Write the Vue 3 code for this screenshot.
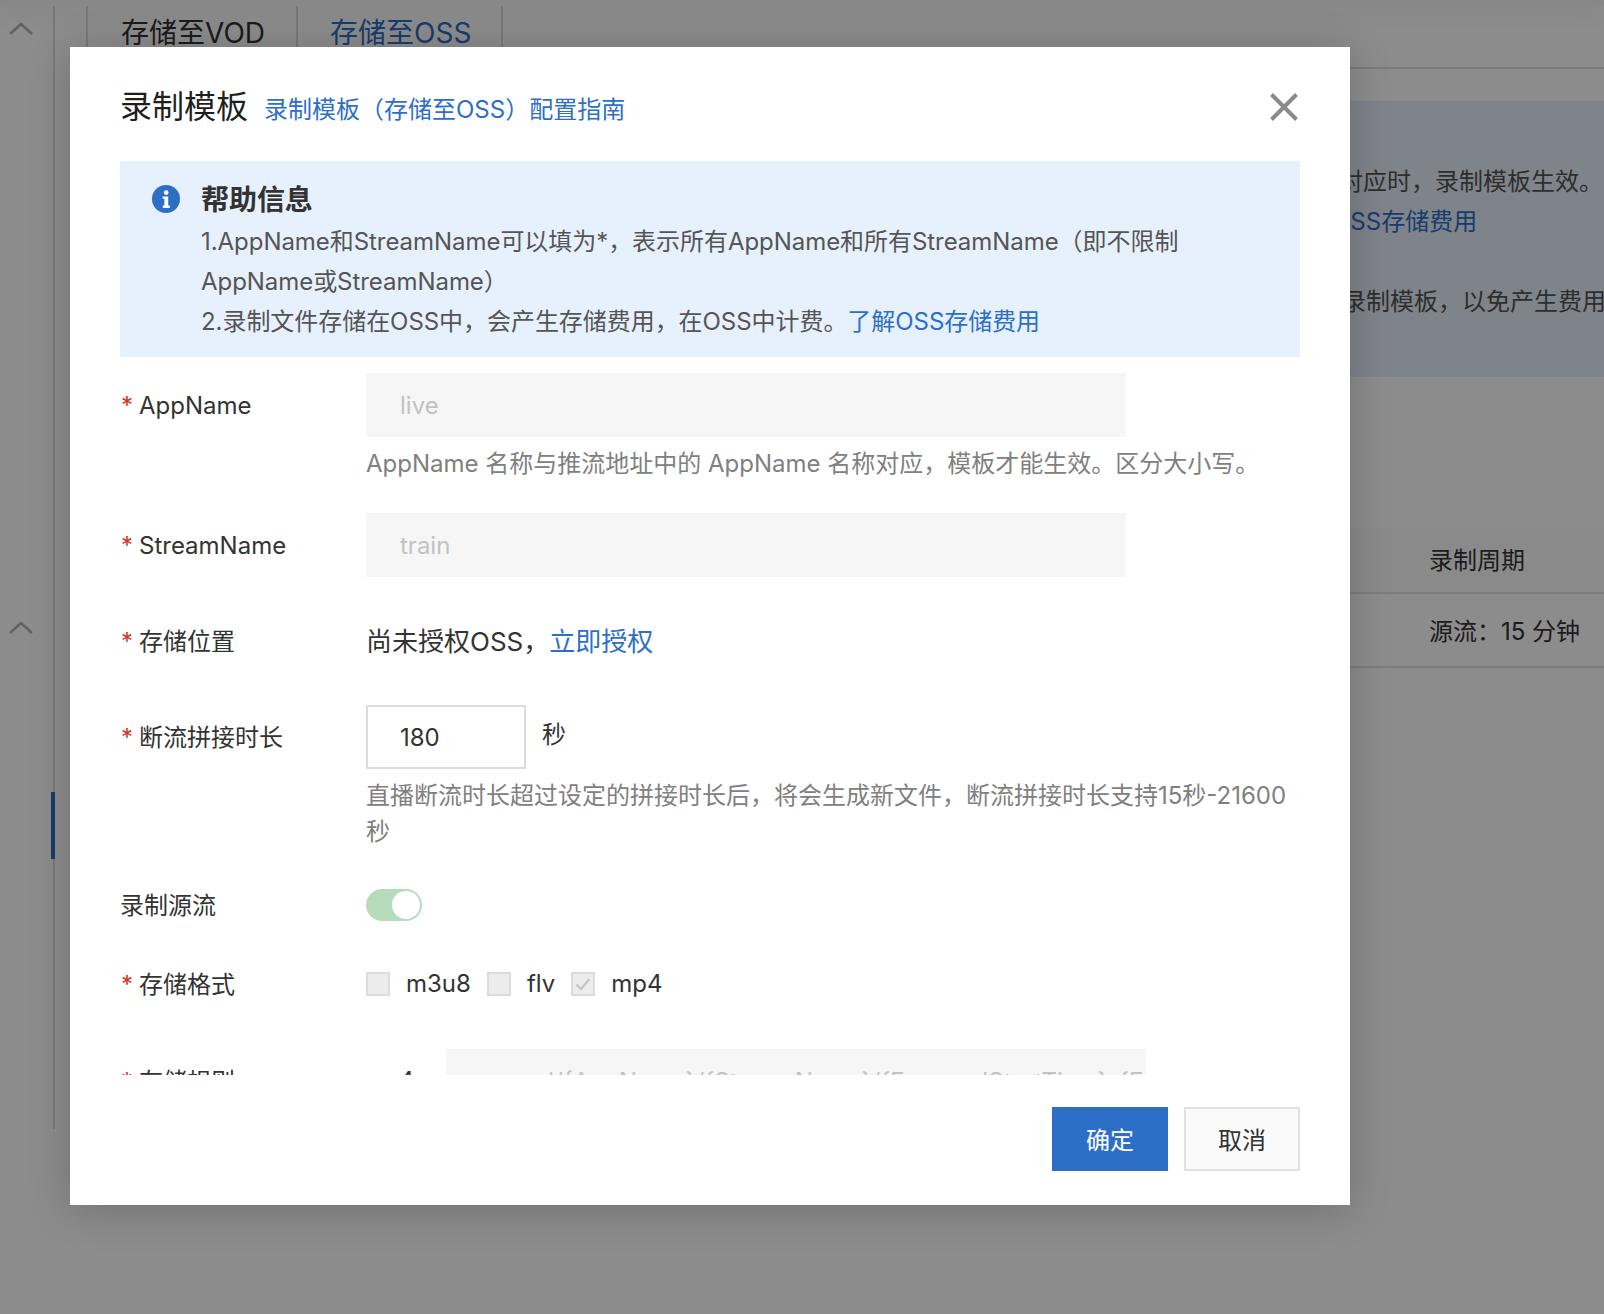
<template>
  <div class="page">
    <div class="topbar"></div>

    <div class="layout">
      <!-- Side nav -->
      <aside class="side">
        <svg class="chevron" viewBox="0 0 24 13"><path d="M1 12 12 2l11 10" /></svg>
        <svg class="chevron chevron-second" viewBox="0 0 24 13"><path d="M1 12 12 2l11 10" /></svg>
        <span class="side-mark"></span>
      </aside>

      <main class="content">
        <div class="tabs">
          <div class="tab">存储至VOD</div>
          <div class="tab tab-active">存储至OSS</div>
        </div>

        <div class="notice">
          <div>对应时，录制模板生效。</div>
          <div class="notice-link"><a>了解OSS存储费用</a></div>
          <div class="notice-last">录制模板，以免产生费用</div>
        </div>

        <div class="table">
          <div class="table-head">录制周期</div>
          <div class="table-row">源流：15 分钟</div>
        </div>
      </main>
    </div>

    <div class="mask"></div>

    <div class="dialog">
      <header class="dialog-head">
        <span class="dialog-title">录制模板</span>
        <a class="dialog-guide">录制模板（存储至OSS）配置指南</a>
        <svg class="dialog-close" viewBox="0 0 28 28"><path d="M1.5 1.5 26.5 26.5M26.5 1.5 1.5 26.5" /></svg>
      </header>

      <div class="dialog-body">
        <div class="help">
          <svg class="help-icon" viewBox="0 0 28 28">
            <circle cx="14" cy="14" r="14" fill="#2d6fc7" />
            <circle cx="14.2" cy="7.6" r="2.3" fill="#fff" />
            <path d="M10.6 11.4h5.6v9.2h1.6v2.4h-7v-2.4h1.6v-6.8h-1.8z" fill="#fff" />
          </svg>
          <div class="help-text">
            <div class="help-title">帮助信息</div>
            <div>1.AppName和StreamName可以填为*，表示所有AppName和所有StreamName（即不限制AppName或StreamName）</div>
            <div>2.录制文件存储在OSS中，会产生存储费用，在OSS中计费。<a>了解OSS存储费用</a></div>
          </div>
        </div>

        <div class="row row-app">
          <label class="label"><i>*</i>AppName</label>
          <div class="field">
            <div class="input input-off">live</div>
            <p class="tip">AppName 名称与推流地址中的 AppName 名称对应，模板才能生效。区分大小写。</p>
          </div>
        </div>

        <div class="row row-stream">
          <label class="label"><i>*</i>StreamName</label>
          <div class="field">
            <div class="input input-off">train</div>
          </div>
        </div>

        <div class="row row-store">
          <label class="label"><i>*</i>存储位置</label>
          <div class="field plain plain-large">尚未授权OSS，<a>立即授权</a></div>
        </div>

        <div class="row row-gap">
          <label class="label"><i>*</i>断流拼接时长</label>
          <div class="field">
            <div class="gap-line">
              <div class="input input-num">180</div>
              <span class="unit">秒</span>
            </div>
            <p class="tip">直播断流时长超过设定的拼接时长后，将会生成新文件，断流拼接时长支持15秒-21600秒</p>
          </div>
        </div>

        <div class="row row-switch">
          <label class="label">录制源流</label>
          <div class="field plain">
            <span class="switch"><span class="knob"></span></span>
          </div>
        </div>

        <div class="row row-format">
          <label class="label"><i>*</i>存储格式</label>
          <div class="field plain checks">
            <label v-for="f in formats" :key="f.name" class="check">
              <span class="box">
                <svg v-if="f.on" viewBox="0 0 20 20"><path d="M3.5 10.5 8 15l8.5-10" /></svg>
              </span>
              {{ f.name }}
            </label>
          </div>
        </div>

        <div class="row row-rule">
          <label class="label"><i>*</i>存储规则</label>
          <div class="field plain rule">
            <span class="rule-ext">mp4</span>
            <div class="input input-off input-rule">record/{AppName}/{StreamName}/{EscapedStartTime}_{EscapedEndTime}</div>
          </div>
        </div>
      </div>

      <footer class="dialog-foot">
        <button class="btn btn-primary">确定</button>
        <button class="btn">取消</button>
      </footer>
    </div>
  </div>
</template>

<script setup>
const formats = [
  { name: "m3u8", on: false },
  { name: "flv", on: false },
  { name: "mp4", on: true },
];
</script>

<style>
html,
body {
  margin: 0;
  background: #fff;
}
</style>

<style scoped>
.page {
  position: relative;
  width: 1604px;
  height: 1314px;
  overflow: hidden;
  background: #fff;
  color: #333;
  font-family: Inter, "Noto Sans CJK SC", sans-serif;
  font-size: 24px;
}

a {
  color: #2d6fc7;
}

.topbar {
  position: relative;
  z-index: 1;
  height: 6px;
  background: #f7f7f7;
  box-shadow: 0 2px 24px rgba(0, 0, 0, 0.14);
}

.layout {
  display: flex;
}

.side {
  position: relative;
  box-sizing: border-box;
  width: 55px;
  height: 1123px;
  flex: none;
  padding: 16px 0 0 9px;
  border-right: 2px solid #dcdcdc;
}

.chevron {
  display: block;
  width: 24px;
  height: 13px;
  fill: none;
  stroke: #b3b3b3;
  stroke-width: 2.6;
}

.chevron-second {
  margin-top: 586px;
}

.side-mark {
  position: absolute;
  top: 786px;
  right: -2px;
  width: 4px;
  height: 67px;
  background: #2d6fc7;
}

.content {
  flex: 1;
  min-width: 0;
  padding-left: 31px;
}

.tabs {
  display: flex;
  height: 61px;
  border-bottom: 2px solid #dcdcdc;
}

.tab {
  box-sizing: border-box;
  width: 210px;
  padding-left: 33px;
  border-left: 2px solid #dcdcdc;
  font-size: 28px;
  line-height: 54px;
}

.tab-active {
  width: 207px;
  padding-left: 32px;
  border-right: 2px solid #dcdcdc;
  color: #2d6fc7;
}

.notice {
  height: 276px;
  margin-top: 32px;
  box-sizing: border-box;
  padding: 61px 0 0 1253px;
  background: #e7eefb;
  line-height: 40px;
  white-space: nowrap;
  color: #555;
}

.notice-link {
  margin-left: -55px;
}

.notice-last {
  margin-top: 40px;
  margin-left: 3px;
}

.table {
  margin-top: 151px;
}

.table-head,
.table-row {
  box-sizing: border-box;
  padding-left: 1343px;
  border-bottom: 2px solid #e3e3e3;
}

.table-head {
  height: 66px;
  line-height: 66px;
  background: #fbfbfb;
}

.table-row {
  height: 74px;
  line-height: 76px;
}

.mask {
  position: absolute;
  inset: 0;
  z-index: 2;
  background: rgba(0, 0, 0, 0.45);
}

.dialog {
  position: absolute;
  top: 47px;
  left: 70px;
  z-index: 3;
  display: flex;
  flex-direction: column;
  width: 1280px;
  height: 1158px;
  background: #fff;
  box-shadow: 0 4px 40px rgba(0, 0, 0, 0.2);
}

.dialog-head {
  position: relative;
  display: flex;
  align-items: baseline;
  flex: none;
  box-sizing: border-box;
  height: 114px;
  padding: 37px 50px 0;
}

.dialog-title {
  color: #1f1f1f;
  font-size: 32px;
  line-height: 46px;
}

.dialog-guide {
  margin-left: 16px;
}

.dialog-close {
  position: absolute;
  top: 46px;
  right: 52px;
  width: 28px;
  height: 28px;
  fill: none;
  stroke: #8a8a8a;
  stroke-width: 4;
}

.dialog-body {
  flex: 1;
  min-height: 0;
  overflow: hidden;
  padding: 0 50px;
}

.help {
  display: flex;
  gap: 21px;
  padding: 19px 30px 15px 32px;
  background: #e6f1fd;
  color: #555;
  line-height: 40px;
  letter-spacing: -0.05px;
}

.help-icon {
  flex: none;
  width: 28px;
  height: 28px;
  margin-top: 5px;
}

.help-title {
  margin-bottom: 2px;
  color: #333;
  font-size: 28px;
  font-weight: 700;
}

.row {
  display: flex;
}

.label {
  display: block;
  flex: none;
  width: 246px;
  height: 64px;
  line-height: 66px;
}

.label i {
  display: inline-block;
  width: 19px;
  padding-left: 1px;
  box-sizing: border-box;
  color: #d93026;
  font-style: normal;
}

.field {
  flex: 1;
  min-width: 0;
}

.plain {
  line-height: 64px;
}

.plain-large {
  font-size: 26px;
  line-height: 66px;
  height: 64px;
}

.input {
  box-sizing: border-box;
  height: 64px;
  padding: 0 34px;
  line-height: 66px;
}

.input-off {
  width: 760px;
  background: #f6f6f6;
  color: #c2c2c2;
}

.input-num {
  width: 160px;
  border: 2px solid #dcdcdc;
  padding: 0 32px;
  line-height: 62px;
}

.tip {
  margin: 9px 0 0;
  color: #808080;
  line-height: 36px;
}

.row-app {
  margin-top: 16px;
}

.row-stream {
  margin-top: 31px;
}

.row-store {
  margin-top: 32px;
}

.row-gap {
  margin-top: 32px;
}

.gap-line {
  display: flex;
  gap: 16px;
}

.unit {
  line-height: 60px;
}

.row-switch {
  margin-top: 24px;
}

.row-switch .label {
  line-height: 64px;
}

.switch {
  position: relative;
  display: block;
  width: 56px;
  height: 32px;
  margin-top: 15px;
  border-radius: 16px;
  background: #b7dcbb;
}

.knob {
  position: absolute;
  top: 2px;
  right: 2px;
  width: 28px;
  height: 28px;
  border-radius: 50%;
  background: #fff;
}

.row-format {
  margin-top: 14px;
}

.checks {
  display: flex;
  gap: 16px;
}

.check {
  display: flex;
  align-items: center;
  gap: 16px;
  color: #333;
}

.box {
  display: block;
  box-sizing: border-box;
  width: 24px;
  height: 24px;
  border: 2px solid #dcdcdc;
  background: #ececec;
}

.box svg {
  display: block;
  width: 20px;
  height: 20px;
  fill: none;
  stroke: #c4c4c4;
  stroke-width: 2;
}

.row-rule {
  margin-top: 33px;
}

.rule {
  display: flex;
  gap: 28px;
}

.rule-ext {
  width: 52px;
  margin-left: -3px;
  padding-right: 3px;
}

.input-rule {
  width: 700px;
  white-space: nowrap;
  overflow: hidden;
}

.dialog-foot {
  display: flex;
  justify-content: flex-end;
  gap: 16px;
  flex: none;
  box-sizing: border-box;
  height: 130px;
  padding: 32px 50px 0;
}

.btn {
  box-sizing: border-box;
  width: 116px;
  height: 64px;
  padding: 0 0 2px;
  border: 2px solid #e0e0e0;
  background: #f9f9f9;
  color: #333;
  font-family: inherit;
  font-size: 24px;
}

.btn-primary {
  border-color: #2d6fc7;
  background: #2d6fc7;
  color: #fff;
}
</style>
